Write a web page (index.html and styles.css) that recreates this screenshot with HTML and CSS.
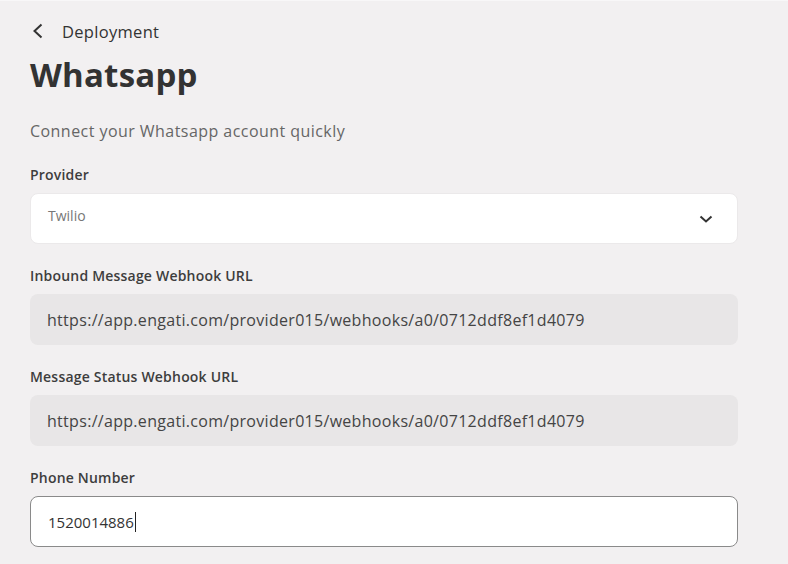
FILE: index.html
```html
<!DOCTYPE html>
<html lang="en">
<head>
    <meta charset="UTF-8">
    <meta name="viewport" content="width=device-width, initial-scale=1.0">
    <title>Whatsapp - Deployment</title>
    <link rel="stylesheet" href="styles.css">
</head>
<body>
    <div class="page">
        <a class="back" href="#">
            <svg class="back-icon" width="14" height="16" viewBox="0 0 14 16">
                <path d="M10.5 1.5 L3.5 8 L10.5 14.5" fill="none" stroke="#333" stroke-width="2"/>
            </svg>
            <span>Deployment</span>
        </a>
        <h1>Whatsapp</h1>
        <p class="intro">Connect your Whatsapp account quickly</p>

        <form class="fields">
            <div class="field">
                <label for="provider">Provider</label>
                <div class="select">
                    <span id="provider" class="select-value">Twilio</span>
                    <svg width="14" height="10" viewBox="0 0 14 10">
                        <path d="M1.5 2.5 L7 7.5 L12.5 2.5" fill="none" stroke="#333" stroke-width="2"/>
                    </svg>
                </div>
            </div>
            <div class="field">
                <label for="inbound">Inbound Message Webhook URL</label>
                <div id="inbound" class="readonly">https://app.engati.com/provider015/webhooks/a0/0712ddf8ef1d4079</div>
            </div>
            <div class="field">
                <label for="status">Message Status Webhook URL</label>
                <div id="status" class="readonly">https://app.engati.com/provider015/webhooks/a0/0712ddf8ef1d4079</div>
            </div>
            <div class="field">
                <label for="phone">Phone Number</label>
                <div class="text-input">
                    <span id="phone">1520014886</span><span class="caret"></span>
                </div>
            </div>
        </form>
    </div>
</body>
</html>
```

FILE: styles.css
```css
body {
    font-family: "Open Sans", "Noto Sans", sans-serif;
    background-color: #f2f0f1;
    border-top: 1px solid #f8f7f8;
    margin: 0;
    color: #333;
}
.page {
    width: 708px;
    padding: 16px 0 0 30px;
}
.back {
    display: flex;
    align-items: center;
    gap: 17px;
    color: #333;
    text-decoration: none;
    font-size: 16.5px;
    font-weight: 500;
    letter-spacing: 0.3px;
    height: 28px;
}
.back-icon {
    margin-left: 1px;
}
h1 {
    margin: 9px 0 0;
    font-size: 33px;
    font-weight: 700;
    line-height: 42px;
    color: #333;
    letter-spacing: 0.2px;
}
.intro {
    margin: 24px 0 0;
    font-size: 16px;
    line-height: 22px;
    letter-spacing: 0.45px;
    color: #666;
}
.fields {
    margin-top: 23px;
    display: flex;
    flex-direction: column;
    gap: 22px;
}
.field {
    display: flex;
    flex-direction: column;
    gap: 9px;
}
label {
    font-size: 14px;
    font-weight: 600;
    line-height: 19px;
    letter-spacing: 0.2px;
    color: #3d3d3d;
}
.select,
.readonly,
.text-input {
    box-sizing: border-box;
    height: 51px;
    border-radius: 8px;
    display: flex;
    align-items: center;
    padding: 0 17px;
}
.select {
    background: #fff;
    justify-content: space-between;
    padding-right: 24px;
    border: 1px solid #ebe9ea;
}
.select-value {
    font-size: 14px;
    color: #777;
    margin-bottom: 7px;
}
.readonly {
    background: #e8e6e7;
    font-size: 16px;
    letter-spacing: 0.3px;
    color: #444;
}
.text-input {
    background: #fff;
    border: 1px solid #8a8a8a;
    font-size: 15px;
    color: #333;
}
.caret {
    display: inline-block;
    width: 1px;
    height: 20px;
    background: #222;
    margin-left: 1px;
}
```
